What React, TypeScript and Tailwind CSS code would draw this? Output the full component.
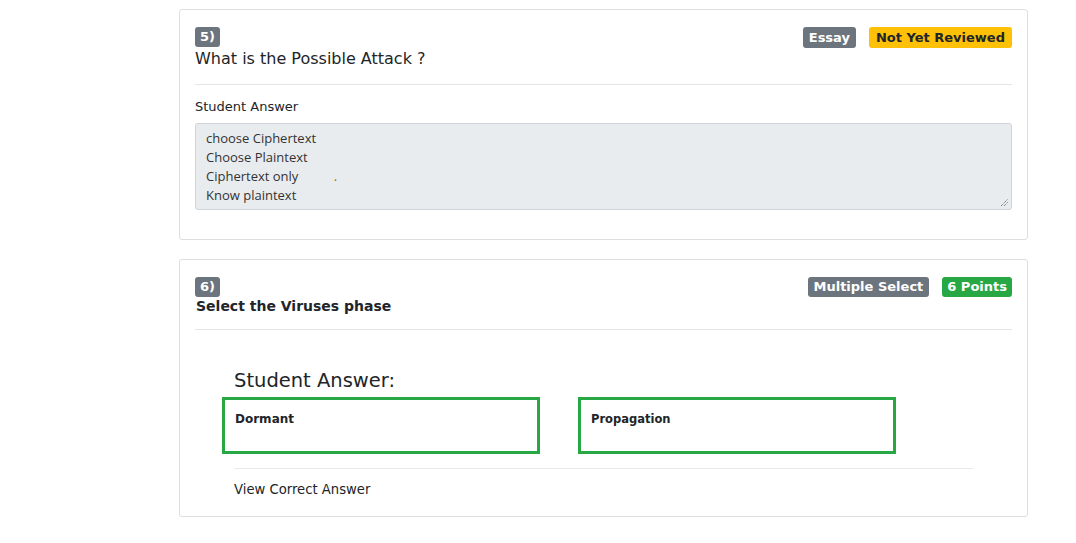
export default function App() {
  const font = { fontFamily: '"DejaVu Sans", "Open Sans", sans-serif' };
  return (
    <div className="w-[1076px] h-[543px] bg-white overflow-hidden" style={font}>
      <div className="ml-[179px] w-[849px] pt-[9px] flex flex-col gap-[19px]">
        {/* Card 5 */}
        <div className="border border-[#dfdfdf] rounded-[3px] h-[231px] px-[15px] pt-[17px]">
          <div className="flex justify-between">
            <div>
              <div className="w-fit bg-[#6c757d] text-white font-bold text-[13px] leading-[20px] px-[5px] rounded-[3px]">5)</div>
              <div className="text-[16px] text-[#212529] leading-[22px] mt-[1px]">What is the Possible Attack ?</div>
            </div>
            <div className="flex gap-[13px] items-start">
              <span className="bg-[#6c757d] text-white font-bold text-[13px] leading-[21px] px-[6px] rounded-[3px]">Essay</span>
              <span className="bg-[#ffc107] text-[#212529] font-bold text-[13px] leading-[21px] px-[7px] rounded-[3px]">Not Yet Reviewed</span>
            </div>
          </div>
          <div className="border-t border-[#e5e5e5] mt-[14px]" />
          <div className="text-[13px] text-[#212529] mt-[13px] leading-[18px]">Student Answer</div>
          <div className="relative mt-[7px] h-[87px] bg-[#e9ecef] border border-[#ced4da] rounded-[3px] pl-[10px] pt-[5px] text-[13px] leading-[19px] text-[#333]" style={{ fontFamily: '"Comic Sans MS", "Open Sans", sans-serif' }}>
            <div>choose Ciphertext</div>
            <div>Choose Plaintext</div>
            <div>Ciphertext only <span className="ml-[32px] text-[#7a7a00]">.</span></div>
            <div>Know plaintext</div>
            <svg className="absolute right-[2px] bottom-[2px]" width="9" height="9" viewBox="0 0 9 9">
              <line x1="1" y1="8" x2="8" y2="1" stroke="#555" strokeWidth="1" strokeDasharray="1 1" />
              <line x1="4" y1="8" x2="8" y2="4" stroke="#555" strokeWidth="1" strokeDasharray="1 1" />
            </svg>
          </div>
        </div>

        {/* Card 6 */}
        <div className="border border-[#dfdfdf] rounded-[3px] h-[258px] px-[15px] pt-[17px]">
          <div className="flex justify-between">
            <div>
              <div className="w-fit bg-[#6c757d] text-white font-bold text-[13px] leading-[20px] px-[5px] rounded-[3px]">6)</div>
              <div className="text-[14px] font-bold text-[#212529] -mt-[2px] leading-[22px] ml-[1px]">Select the Viruses phase</div>
            </div>
            <div className="flex gap-[13px] items-start">
              <span className="bg-[#6c757d] text-white font-bold text-[13px] leading-[20px] px-[6px] rounded-[3px]">Multiple Select</span>
              <span className="bg-[#28a745] text-white font-bold text-[13px] leading-[20px] px-[5px] rounded-[3px]">6 Points</span>
            </div>
          </div>
          <div className="border-t border-[#e5e5e5] mt-[12px]" />
          <div className="text-[19.5px] text-[#212529] mt-[39px] ml-[39px] leading-[24px]">Student Answer:</div>
          <div className="flex gap-[38px] ml-[27px] mt-[4px]">
            <div className="w-[318px] h-[57px] border-[3px] border-[#28a745] px-[10px] pt-[10px] text-[12px] leading-[18px] font-bold text-[#212529]">Dormant</div>
            <div className="w-[318px] h-[57px] border-[3px] border-[#28a745] px-[10px] pt-[10px] text-[11.5px] leading-[18px] font-bold text-[#212529]">Propagation</div>
          </div>
          <div className="border-t border-[#e9e9e9] mt-[14px] ml-[39px] w-[739px]" />
          <div className="text-[13.2px] leading-[18px] text-[#212529] mt-[12px] ml-[39px]">View Correct Answer</div>
        </div>
      </div>
    </div>
  );
}
